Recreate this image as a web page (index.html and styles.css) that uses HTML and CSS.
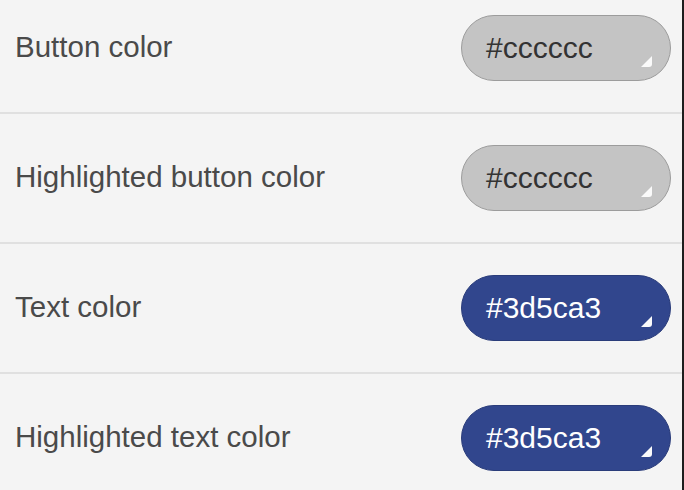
FILE: index.html
```html
<!DOCTYPE html>
<html lang="en">
<head>
    <meta charset="UTF-8">
    <meta name="viewport" content="width=device-width, initial-scale=1.0">
    <title>Colors</title>
    <link rel="stylesheet" href="styles.css">
</head>
<body>
    <div class="ajustes">
        <section class="fila">
            <p class="etiqueta">Button color</p>
            <div class="color gris">#cccccc<span class="asa"></span></div>
        </section>
        <section class="fila">
            <p class="etiqueta">Highlighted button color</p>
            <div class="color gris">#cccccc<span class="asa"></span></div>
        </section>
        <section class="fila">
            <p class="etiqueta">Text color</p>
            <div class="color azul">#3d5ca3<span class="asa"></span></div>
        </section>
        <section class="fila">
            <p class="etiqueta">Highlighted text color</p>
            <div class="color azul">#3d5ca3<span class="asa"></span></div>
        </section>
    </div>
</body>
</html>
```

FILE: styles.css
```css
body{
    margin: 0;
    background: #f4f4f4;
    font-family: "Liberation Sans", Arial, sans-serif;
}
.ajustes{
    width: 682px;
    height: 490px;
    border-right: 2px solid #1e1e1e;
    overflow: hidden;
}
.fila{
    display: flex;
    align-items: center;
    justify-content: space-between;
    padding: 31px 11px 31px 15px;
    border-bottom: 2px solid #e0e0e0;
}
.fila:first-child{
    padding-top: 15px;
}
.etiqueta{
    margin: 0 0 3px 0;
    font-size: 29.5px;
    color: #4a4a4a;
}
.color{
    position: relative;
    box-sizing: border-box;
    width: 210px;
    height: 66px;
    border-radius: 33px;
    padding-left: 24px;
    display: flex;
    align-items: center;
    font-size: 30px;
}
.gris{
    background: #c4c4c4;
    border: 1px solid #9c9c9c;
    color: #333;
}
.azul{
    background: #31468d;
    border: 1px solid #2a3c7a;
    color: #fff;
}
.asa{
    position: absolute;
    right: 18px;
    bottom: 13px;
    width: 11px;
    height: 11px;
    background: #fafafa;
    clip-path: polygon(100% 0, 100% 100%, 0 100%);
    border-radius: 0 0 3px 0;
}
```
